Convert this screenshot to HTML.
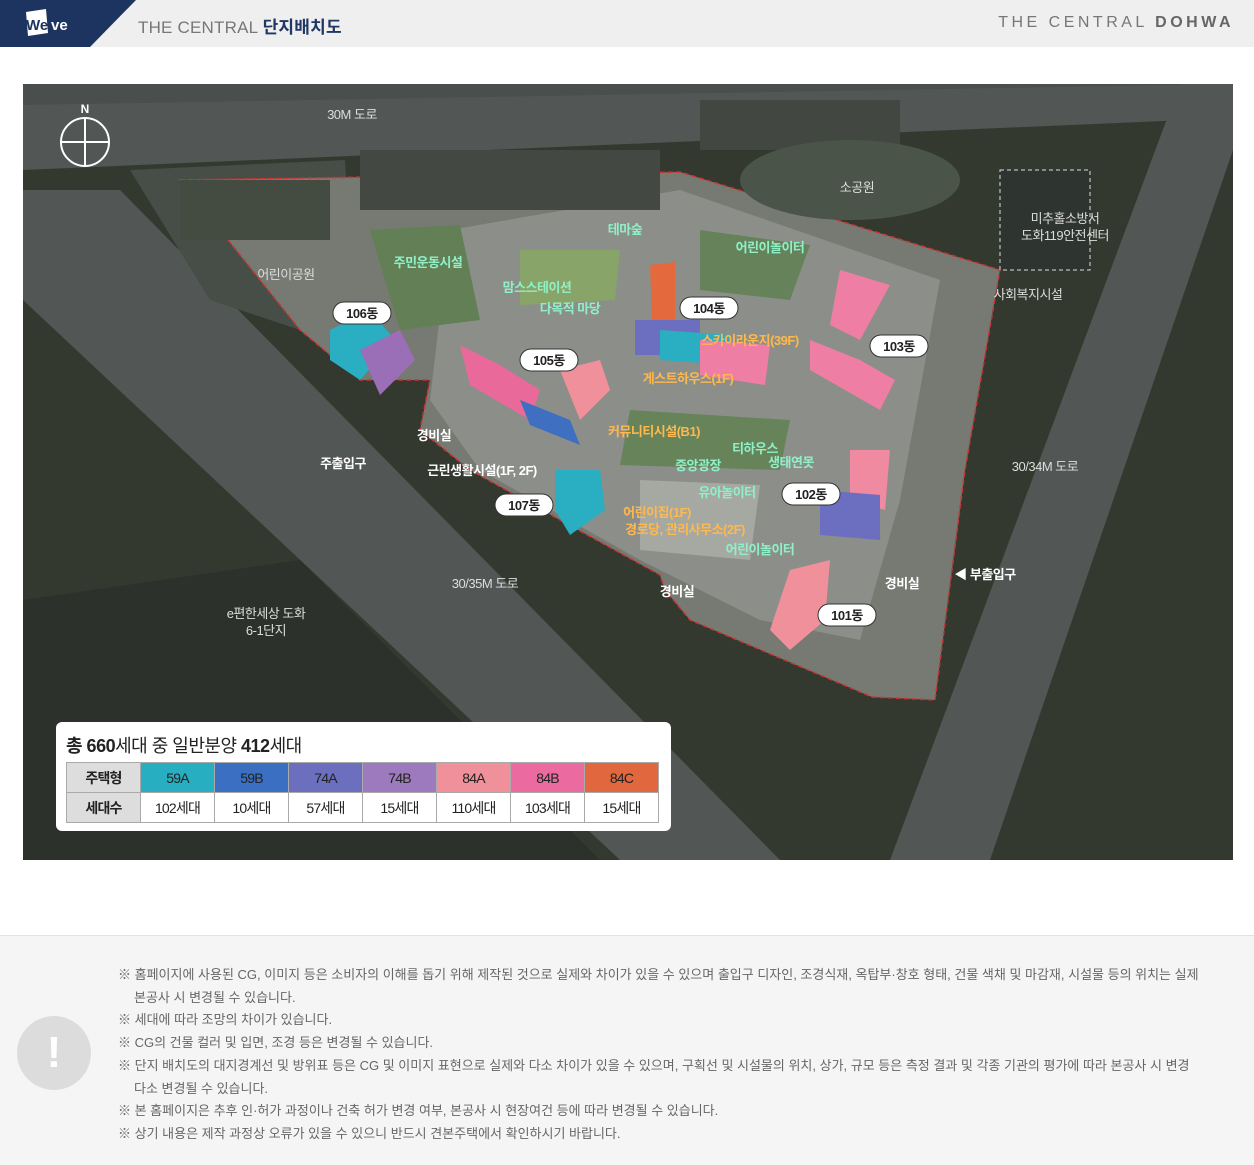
<!DOCTYPE html>
<html><head><meta charset="utf-8"><style>
*{margin:0;padding:0;box-sizing:border-box}
body{width:1254px;height:1165px;background:#fff;font-family:"Liberation Sans","Noto Sans CJK KR",sans-serif;position:relative;overflow:hidden}
.hdr{position:absolute;left:0;top:0;width:1254px;height:47px;background:#efefef}
.t1{position:absolute;left:138px;top:13px;font-size:17px;color:#777;letter-spacing:0.2px}
.t1 b{color:#1f3764}
.t2{position:absolute;right:20px;top:14px;font-size:16px;color:#777;letter-spacing:3.5px}
.t2 b{color:#666}
.legend{position:absolute;left:56px;top:722px;width:615px;height:109px;background:#fff;border-radius:6px}
.legend h3{position:absolute;left:10px;top:10px;font-size:18px;font-weight:normal;color:#222;letter-spacing:-0.5px}
table{position:absolute;left:10px;top:40px;border-collapse:collapse;font-size:14px;letter-spacing:-0.8px}
td{border:1px solid #aaa;height:30px;text-align:center;width:74px;color:#222}
td.h{width:74px;background:#ddd;font-weight:bold}
.foot{position:absolute;left:0;top:935px;width:1254px;height:230px;background:#f5f5f5;border-top:1px solid #e3e3e3}
.ic{position:absolute;left:17px;top:80px;width:74px;height:74px;border-radius:50%;background:#dcdcdc;color:#fff;font-size:44px;text-align:center;line-height:74px;font-weight:bold}
.notes{position:absolute;left:118px;top:28px;font-size:13px;color:#666;line-height:22.7px;letter-spacing:0px}
.notes p{padding-left:16px;text-indent:-16px}
</style></head><body>
<div class="hdr">
<svg width="140" height="47" style="position:absolute;left:0;top:0"><polygon points="0,0 136,0 90,47 0,47" fill="#1d3461"/><polygon points="26,12 46,9 48,33 28,36" fill="#fff"/><text x="26" y="30" font-size="15" font-weight="bold" fill="#1d3461" font-family="Liberation Sans">We</text><text x="51" y="30" font-size="15" font-weight="bold" fill="#fff" font-family="Liberation Sans">ve</text></svg>
<div class="t1">THE CENTRAL <b>단지배치도</b></div>
<div class="t2">THE CENTRAL <b>DOHWA</b></div>
</div>
<svg width="1254" height="1165" style="position:absolute;left:0;top:0" font-family="Liberation Sans,Noto Sans CJK KR,sans-serif">
<rect x="23" y="84" width="1210" height="776" fill="#33392f"/>
<polygon points="23,110 1233,84 1233,84 23,84" fill="#4a4e4c"/>
<polygon points="23,105 1233,84 1233,118 23,170" fill="#525654"/>
<polygon points="23,190 120,190 780,860 620,860 23,300" fill="#525654"/>
<polygon points="1180,84 1233,84 1233,150 990,860 890,860" fill="#525654"/>
<polygon points="130,170 345,160 350,240 300,330 210,300" fill="#474d47"/>
<polygon points="23,600 300,560 600,860 23,860" fill="#2c322b"/>
<polygon points="180,180 680,172 1000,270 965,470 935,700 872,697 690,620 665,590 660,575 560,520 470,470 420,430 430,380 360,380 300,330" fill="#767a72" stroke="#c33" stroke-width="1.5" stroke-dasharray="5,3"/>
<polygon points="450,230 680,190 940,280 900,500 860,640 760,620 640,560 480,470 430,400" fill="#8c8f89"/>
<polygon points="370,230 460,225 480,320 400,330" fill="#627f55"/>
<polygon points="520,250 620,250 615,300 520,305" fill="#88a468"/>
<polygon points="700,230 810,245 790,300 700,290" fill="#65825a"/>
<polygon points="630,410 790,420 780,470 620,465" fill="#66835a"/>
<polygon points="640,480 760,485 750,560 640,550" fill="#a6a8a2"/>
<rect x="180" y="180" width="150" height="60" fill="#444c42"/>
<rect x="360" y="150" width="300" height="60" fill="#434843"/>
<rect x="700" y="100" width="200" height="50" fill="#424742"/>
<ellipse cx="850" cy="180" rx="110" ry="40" fill="#4a5449"/>
<rect x="1000" y="170" width="90" height="100" fill="#2e3430" stroke="#ddd" stroke-dasharray="4,3"/>
<g>
<polygon points="330,330 370,310 395,340 360,380 330,360" fill="#2aaec1"/>
<polygon points="360,350 400,330 415,360 380,395" fill="#9b6fb7"/>
<polygon points="460,345 500,365 540,390 530,420 470,385" fill="#e8699a"/>
<polygon points="520,400 570,420 580,445 530,425" fill="#3e6fc0"/>
<polygon points="560,370 600,360 610,390 580,420" fill="#f0909a"/>
<polygon points="555,470 600,470 605,510 570,535 555,510" fill="#2aaec1"/>
<polygon points="650,265 675,262 675,320 652,322" fill="#e46a3e"/>
<polygon points="635,320 700,320 700,355 635,355" fill="#6c6ec0"/>
<polygon points="660,330 730,335 730,365 660,360" fill="#2aaec1"/>
<polygon points="700,340 770,345 765,385 700,375" fill="#ef7ea5"/>
<polygon points="840,270 890,285 860,340 830,325" fill="#ef7ea5"/>
<polygon points="810,340 860,360 895,380 880,410 810,370" fill="#ef7ea5"/>
<polygon points="850,450 890,450 885,510 850,500" fill="#ef8aa0"/>
<polygon points="820,490 880,495 880,540 820,535" fill="#6c6ec0"/>
<polygon points="790,570 830,560 825,620 790,650 770,630" fill="#f0909a"/>
</g>
<g font-size="13" font-weight="bold" text-anchor="middle" fill="#fff" letter-spacing="-0.5">
<rect x="333" y="302" width="58" height="22" rx="11" fill="#fff" stroke="#333"/><text x="362" y="318" fill="#222">106동</text>
<rect x="520" y="349" width="58" height="22" rx="11" fill="#fff" stroke="#333"/><text x="549" y="365" fill="#222">105동</text>
<rect x="680" y="297" width="58" height="22" rx="11" fill="#fff" stroke="#333"/><text x="709" y="313" fill="#222">104동</text>
<rect x="870" y="335" width="58" height="22" rx="11" fill="#fff" stroke="#333"/><text x="899" y="351" fill="#222">103동</text>
<rect x="782" y="483" width="58" height="22" rx="11" fill="#fff" stroke="#333"/><text x="811" y="499" fill="#222">102동</text>
<rect x="818" y="604" width="58" height="22" rx="11" fill="#fff" stroke="#333"/><text x="847" y="620" fill="#222">101동</text>
<rect x="495" y="494" width="58" height="22" rx="11" fill="#fff" stroke="#333"/><text x="524" y="510" fill="#222">107동</text>
<text x="428" y="267" fill="#8ff0c8">주민운동시설</text>
<text x="625" y="234" fill="#8ff0c8">테마숲</text>
<text x="770" y="252" fill="#8ff0c8">어린이놀이터</text>
<text x="537" y="292" fill="#8ff0c8">맘스스테이션</text>
<text x="570" y="313" fill="#8ff0c8">다목적 마당</text>
<text x="750" y="345" fill="#ffb84d">스카이라운지(39F)</text>
<text x="688" y="383" fill="#ffb84d">게스트하우스(1F)</text>
<text x="654" y="436" fill="#ffb84d">커뮤니티시설(B1)</text>
<text x="755" y="453" fill="#8ff0c8">티하우스</text>
<text x="791" y="467" fill="#8ff0c8">생태연못</text>
<text x="698" y="470" fill="#8ff0c8">중앙광장</text>
<text x="727" y="497" fill="#8ff0c8">유아놀이터</text>
<text x="657" y="517" fill="#ffb84d">어린이집(1F)</text>
<text x="685" y="534" fill="#ffb84d">경로당, 관리사무소(2F)</text>
<text x="760" y="554" fill="#8ff0c8">어린이놀이터</text>
<text x="434" y="440">경비실</text>
<text x="482" y="475">근린생활시설(1F, 2F)</text>
<text x="343" y="468">주출입구</text>
<text x="677" y="596">경비실</text>
<text x="902" y="588">경비실</text>
<text x="985" y="579">◀ 부출입구</text>
</g>
<g font-size="13" text-anchor="middle" fill="#ddd" letter-spacing="-0.5">
<text x="352" y="119">30M 도로</text>
<text x="286" y="279">어린이공원</text>
<text x="857" y="192">소공원</text>
<text x="1065" y="223">미추홀소방서</text>
<text x="1065" y="240">도화119안전센터</text>
<text x="1028" y="299">사회복지시설</text>
<text x="1045" y="471">30/34M 도로</text>
<text x="485" y="588">30/35M 도로</text>
<text x="266" y="618">e편한세상 도화</text>
<text x="266" y="635">6-1단지</text>
</g>
<circle cx="85" cy="142" r="24" fill="none" stroke="#fff" stroke-width="2"/><line x1="85" y1="118" x2="85" y2="166" stroke="#fff" stroke-width="2"/><line x1="61" y1="142" x2="109" y2="142" stroke="#fff" stroke-width="2"/><text x="85" y="113" font-size="12" fill="#fff" text-anchor="middle" font-weight="bold">N</text>
</svg>
<div class="legend"><h3><b>총 660</b>세대 중 일반분양 <b>412</b>세대</h3>
<table><tr><td class="h">주택형</td><td style="background:#27aec0">59A</td><td style="background:#3a6fc2">59B</td><td style="background:#6b6fbe">74A</td><td style="background:#9d79bd">74B</td><td style="background:#f0909a">84A</td><td style="background:#eb6a9f">84B</td><td style="background:#e0673e">84C</td></tr>
<tr><td class="h">세대수</td><td>102세대</td><td>10세대</td><td>57세대</td><td>15세대</td><td>110세대</td><td>103세대</td><td>15세대</td></tr></table></div>
<div class="foot"><div class="ic">!</div><div class="notes">
<p>※ 홈페이지에 사용된 CG, 이미지 등은 소비자의 이해를 돕기 위해 제작된 것으로 실제와 차이가 있을 수 있으며 출입구 디자인, 조경식재, 옥탑부·창호 형태, 건물 색채 및 마감재, 시설물 등의 위치는 실제<br>본공사 시 변경될 수 있습니다.</p>
<p>※ 세대에 따라 조망의 차이가 있습니다.</p>
<p>※ CG의 건물 컬러 및 입면, 조경 등은 변경될 수 있습니다.</p>
<p>※ 단지 배치도의 대지경계선 및 방위표 등은 CG 및 이미지 표현으로 실제와 다소 차이가 있을 수 있으며, 구획선 및 시설물의 위치, 상가, 규모 등은 측정 결과 및 각종 기관의 평가에 따라 본공사 시 변경<br>다소 변경될 수 있습니다.</p>
<p>※ 본 홈페이지은 추후 인·허가 과정이나 건축 허가 변경 여부, 본공사 시 현장여건 등에 따라 변경될 수 있습니다.</p>
<p>※ 상기 내용은 제작 과정상 오류가 있을 수 있으니 반드시 견본주택에서 확인하시기 바랍니다.</p>
</div></div>
</body></html>
